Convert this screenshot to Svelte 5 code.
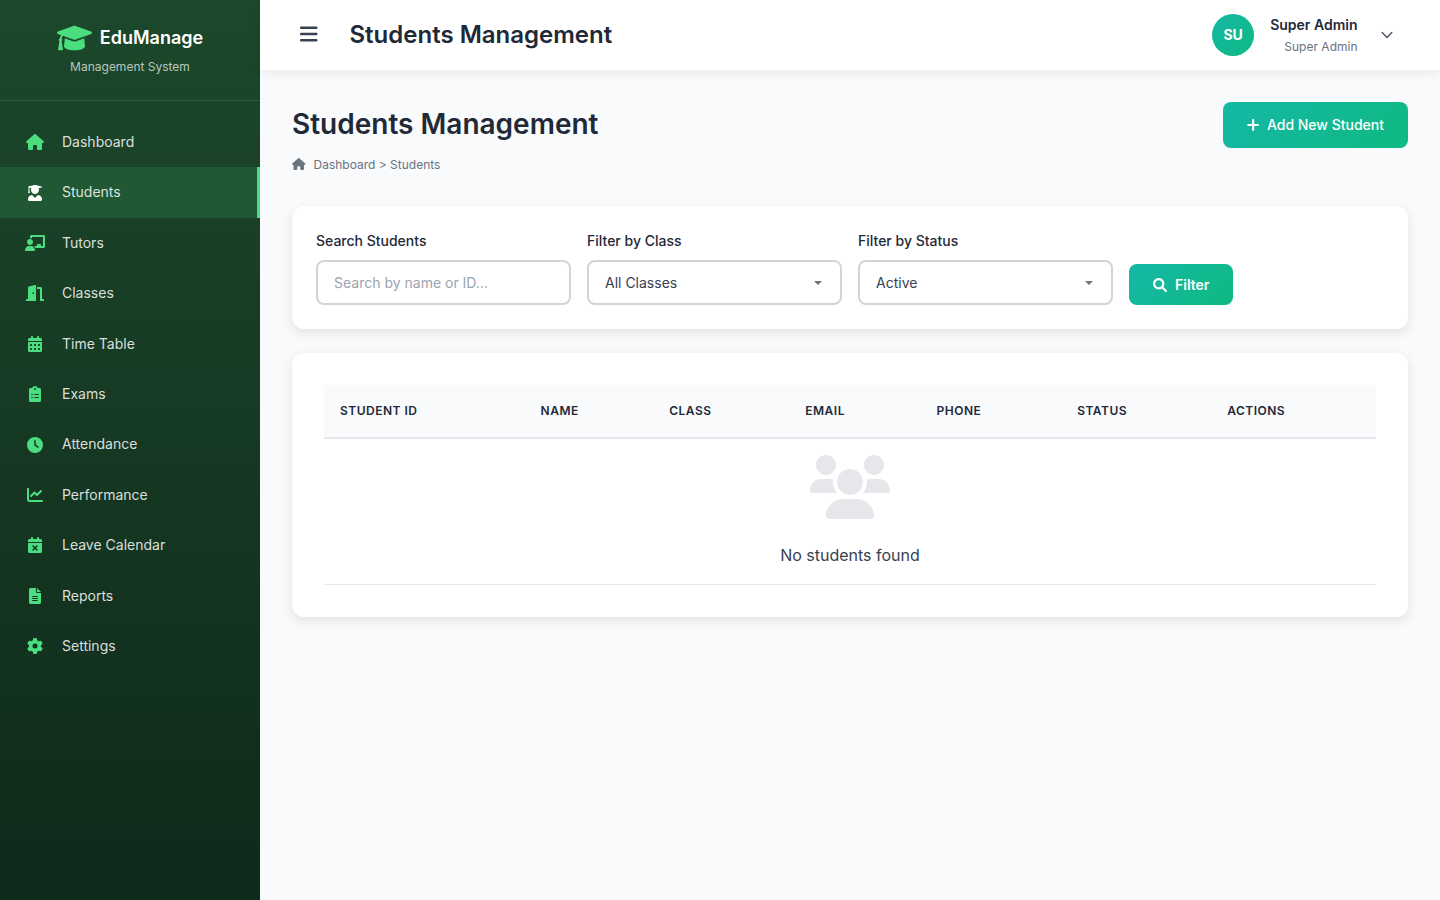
<script>
	const CALENDAR =
		'M128 0c17.7 0 32 14.3 32 32V64H288V32c0-17.7 14.3-32 32-32s32 14.3 32 32V64h48c26.5 0 48 21.5 48 48v48H0V112C0 85.5 21.5 64 48 64H96V32c0-17.7 14.3-32 32-32zM0 192H448V464c0 26.5-21.5 48-48 48H48c-26.5 0-48-21.5-48-48V192z';
	const DAY = 'v32c0 8.8 7.2 16 16 16h32c8.8 0 16-7.2 16-16v-32c0-8.8-7.2-16-16-16h-32c-8.8 0-16 7.2-16 16z';

	// each icon: viewBox width (height is always 512) and path
	const icons = {
		cap: [640, 'M623.1 136.9l-282.7-101.2c-13.73-4.91-28.7-4.91-42.43 0L16.05 136.9C6.438 140.4 0 149.6 0 160s6.438 19.65 16.05 23.09L76.07 204.6c-11.89 15.8-20.26 34.16-24.55 53.95C40.05 263.4 32 274.8 32 288c0 9.953 4.814 18.49 11.94 24.36l-24.83 149C17.48 471.1 25 480 34.89 480H93.11c9.887 0 17.41-8.879 15.78-18.63l-24.83-149C91.19 306.5 96 297.1 96 288c0-10.29-5.174-19.03-12.72-24.89c4.252-17.76 12.88-33.82 24.94-47.03l190.6 68.23c13.73 4.91 28.7 4.91 42.43 0l282.7-101.2C633.6 179.6 640 170.4 640 160S633.6 140.4 623.1 136.9zM351.1 314.4C341.7 318.1 330.9 320 320 320c-10.92 0-21.69-1.867-32-5.555L142.8 262.5L128 405.3C128 446.6 213.1 480 320 480c105.1 0 192-33.4 192-74.67l-14.78-142.9L351.1 314.4z'],
		home: [576, 'M575.8 255.5c0 18-15 32.1-32 32.1h-32l.7 160.2c0 2.7-.2 5.4-.5 8.1V472c0 22.1-17.9 40-40 40H456c-1.1 0-2.2 0-3.3-.1c-1.4 .1-2.8 .1-4.2 .1H416 392c-22.1 0-40-17.9-40-40V448 384c0-17.7-14.3-32-32-32H256c-17.7 0-32 14.3-32 32v64 24c0 22.1-17.9 40-40 40H160 128.1c-1.5 0-3-.1-4.5-.2c-1.2 .1-2.4 .2-3.6 .2H104c-22.1 0-40-17.9-40-40V360c0-.9 0-1.9 .1-2.8V287.6H32c-18 0-32-14-32-32.1c0-9 3-17 10-24L266.4 8c7-7 15-8 22-8s15 2 21 7L564.8 231.5c8 7 12 15 11 24z'],
		student: [448, 'M319.4 320.6L224 416l-95.4-95.4C57.1 323.7 0 382.2 0 454.4v9.6c0 26.5 21.5 48 48 48h352c26.5 0 48-21.5 48-48v-9.6c0-72.2-57.1-130.7-128.6-133.8zM13.6 79.8l6.4 1.5v58.4c-7 4.2-12 11.5-12 20.3 0 8.4 4.6 15.4 11.1 19.7L3.5 242c-1.7 6.9 2.1 14 7.6 14h41.8c5.5 0 9.3-7.1 7.6-14l-15.6-62.3C51.4 175.4 56 168.4 56 160c0-8.8-5-16.1-12-20.3V87.1l66 15.9c-8.6 17.2-14 36.4-14 57 0 70.7 57.3 128 128 128s128-57.3 128-128c0-20.6-5.3-39.8-14-57l96.3-23.2c18.2-4.4 18.2-27.1 0-31.5l-190.4-46c-13-3.1-26.7-3.1-39.7 0L13.6 48.2c-18.1 4.4-18.1 27.2 0 31.6z'],
		tutor: [640, 'M592 0h-384C181.5 0 160 22.25 160 49.63V96c23.42 0 45.1 6.781 63.1 17.81V64h352v288h-64V304c0-8.838-7.164-16-16-16h-96c-8.836 0-16 7.162-16 16V352H287.3c22.07 16.48 39.54 38.5 50.76 64h253.9C618.5 416 640 393.8 640 366.4V49.63C640 22.25 618.5 0 592 0zM160 320c53.02 0 96-42.98 96-96c0-53.02-42.98-96-96-96C106.1 128 64 170.1 64 224C64 277 106.1 320 160 320zM192 352H128c-70.69 0-128 57.3-128 128C0 497.7 14.33 512 32 512h256c17.67 0 32-14.33 32-32C320 409.3 262.7 352 192 352z'],
		door: [576, 'M560 448H512V113.5c0-27.25-21.5-49.5-48-49.5L352 64.01V128h96V512h112c8.875 0 16-7.125 16-15.1v-31.1C576 455.1 568.9 448 560 448zM280.3 1.007l-192 49.75C73.1 54.51 64 67.76 64 82.88V448H16c-8.875 0-16 7.125-16 15.1v31.1C0 504.9 7.125 512 16 512H320V33.13C320 11.63 300.5-4.243 280.3 1.007zM232 288c-13.25 0-24-14.37-24-31.1c0-17.62 10.75-31.1 24-31.1S256 238.4 256 256C256 273.6 245.3 288 232 288z'],
		timetable: [448, CALENDAR + [272, 400].map((y) => [64, 192, 320].map((x) => `M${x} ${y}${DAY}`).join('')).join('')],
		clipboard: [384, 'M192 0c-41.8 0-77.4 26.7-90.5 64H48C21.5 64 0 85.5 0 112V464c0 26.5 21.5 48 48 48H336c26.5 0 48-21.5 48-48V112c0-26.5-21.5-48-48-48H282.5C269.4 26.7 233.8 0 192 0zm0 64a32 32 0 1 1 0 64 32 32 0 1 1 0-64zM72 272a24 24 0 1 1 48 0 24 24 0 1 1 -48 0zm104-16H304c8.8 0 16 7.2 16 16s-7.2 16-16 16H176c-8.8 0-16-7.2-16-16s7.2-16 16-16zM72 368a24 24 0 1 1 48 0 24 24 0 1 1 -48 0zm88 0c0-8.8 7.2-16 16-16H304c8.8 0 16 7.2 16 16s-7.2 16-16 16H176c-8.8 0-16-7.2-16-16z'],
		clock: [512, 'M256 0a256 256 0 1 1 0 512A256 256 0 1 1 256 0zM232 120V256c0 8 4 15.5 10.7 20l96 64c11 7.4 25.9 4.4 33.3-6.7s4.4-25.9-6.7-33.3L280 243.2V120c0-13.3-10.7-24-24-24s-24 10.7-24 24z'],
		chart: [512, 'M64 64c0-17.7-14.3-32-32-32S0 46.3 0 64V400c0 44.2 35.8 80 80 80H480c17.7 0 32-14.3 32-32s-14.3-32-32-32H80c-8.8 0-16-7.2-16-16V64zm406.6 86.6c12.5-12.5 12.5-32.8 0-45.3s-32.8-12.5-45.3 0L320 210.7l-57.4-57.4c-12.5-12.5-32.8-12.5-45.3 0l-112 112c-12.5 12.5-12.5 32.8 0 45.3s32.8 12.5 45.3 0L240 221.3l57.4 57.4c12.5 12.5 32.8 12.5 45.3 0l128-128z'],
		leave: [448, CALENDAR + 'M305 305c9.4-9.4 9.4-24.6 0-33.9s-24.6-9.4-33.9 0l-47 47-47-47c-9.4-9.4-24.6-9.4-33.9 0s-9.4 24.6 0 33.9l47 47-47 47c-9.4 9.4-9.4 24.6 0 33.9s24.6 9.4 33.9 0l47-47 47 47c9.4 9.4 24.6 9.4 33.9 0s9.4-24.6 0-33.9l-47-47 47-47z'],
		file: [384, 'M48 0C21.5 0 0 21.5 0 48V464c0 26.5 21.5 48 48 48H336c26.5 0 48-21.5 48-48V160H256c-17.7 0-32-14.3-32-32V0H48zM256 0V128H384L256 0zM112 256H272c8.8 0 16 7.2 16 16s-7.2 16-16 16H112c-8.8 0-16-7.2-16-16s7.2-16 16-16zm0 64H272c8.8 0 16 7.2 16 16s-7.2 16-16 16H112c-8.8 0-16-7.2-16-16s7.2-16 16-16zm0 64H272c8.8 0 16 7.2 16 16s-7.2 16-16 16H112c-8.8 0-16-7.2-16-16s7.2-16 16-16z'],
		gear: [512, 'M495.9 166.6c3.2 8.7 .5 18.4-6.4 24.6l-43.3 39.4c1.1 8.3 1.7 16.8 1.7 25.4s-.6 17.1-1.7 25.4l43.3 39.4c6.9 6.2 9.6 15.9 6.4 24.6c-4.4 11.9-9.7 23.3-15.8 34.3l-4.7 8.1c-6.6 11-14 21.4-22.1 31.2c-5.9 7.2-15.7 9.6-24.5 6.8l-55.7-17.7c-13.4 10.3-28.2 18.9-44 25.4l-12.5 57.1c-2 9.1-9 16.3-18.2 17.8c-13.8 2.3-28 3.5-42.5 3.5s-28.7-1.2-42.5-3.5c-9.2-1.5-16.2-8.7-18.2-17.8l-12.5-57.1c-15.8-6.5-30.6-15.1-44-25.4L83.1 425.9c-8.8 2.8-18.6 .3-24.5-6.8c-8.1-9.8-15.5-20.2-22.1-31.2l-4.7-8.1c-6.1-11-11.4-22.4-15.8-34.3c-3.2-8.7-.5-18.4 6.4-24.6l43.3-39.4C64.6 273.1 64 264.6 64 256s.6-17.1 1.7-25.4L22.4 191.2c-6.9-6.2-9.6-15.9-6.4-24.6c4.4-11.9 9.7-23.3 15.8-34.3l4.7-8.1c6.6-11 14-21.4 22.1-31.2c5.9-7.2 15.7-9.6 24.5-6.8l55.7 17.7c13.4-10.3 28.2-18.9 44-25.4l12.5-57.1c2-9.1 9-16.3 18.2-17.8C227.3 1.2 241.5 0 256 0s28.7 1.2 42.5 3.5c9.2 1.5 16.2 8.7 18.2 17.8l12.5 57.1c15.8 6.5 30.6 15.1 44 25.4l55.7-17.7c8.8-2.8 18.6-.3 24.5 6.8c8.1 9.8 15.5 20.2 22.1 31.2l4.7 8.1c6.1 11 11.4 22.4 15.8 34.3zM256 336a80 80 0 1 0 0-160 80 80 0 1 0 0 160z'],
		bars: [448, 'M0 96C0 78.3 14.3 64 32 64H416c17.7 0 32 14.3 32 32s-14.3 32-32 32H32C14.3 128 0 113.7 0 96zM0 256c0-17.7 14.3-32 32-32H416c17.7 0 32 14.3 32 32s-14.3 32-32 32H32c-17.7 0-32-14.3-32-32zM448 416c0 17.7-14.3 32-32 32H32c-17.7 0-32-14.3-32-32s14.3-32 32-32H416c17.7 0 32 14.3 32 32z'],
		plus: [448, 'M264 80c0-22-18-40-40-40s-40 18-40 40V216H48c-22 0-40 18-40 40s18 40 40 40H184V432c0 22 18 40 40 40s40-18 40-40V296H400c22 0 40-18 40-40s-18-40-40-40H264V80z'],
		search: [512, 'M500.3 443.7l-119.7-119.7c27.22-40.41 40.65-90.9 33.46-144.7C401.8 87.79 326.8 13.32 235.2 1.723C99.01-15.51-15.51 99.01 1.724 235.2c11.6 91.64 86.08 166.7 177.6 178.9c53.8 7.189 104.3-6.236 144.7-33.46l119.7 119.7c15.62 15.62 40.95 15.62 56.57 0C515.9 484.7 515.9 459.3 500.3 443.7zM79.1 208c0-70.58 57.42-128 128-128s128 57.42 128 128c0 70.58-57.42 128-128 128S79.1 278.6 79.1 208z'],
		users: [640, 'M319.9 320c57.41 0 103.1-46.56 103.1-104c0-57.44-46.54-104-103.1-104c-57.41 0-103.1 46.56-103.1 104C215.9 273.4 262.5 320 319.9 320zM369.9 352H270.1C191.6 352 128 411.7 128 485.3C128 500.1 140.7 512 156.4 512h327.2C499.3 512 512 500.1 512 485.3C512 411.7 448.4 352 369.9 352zM512 160c44.18 0 80-35.82 80-80S556.2 0 512 0c-44.18 0-80 35.82-80 80S467.8 160 512 160zM183.9 216c0-5.449 .9824-10.63 1.609-15.91C174.6 194.1 162.6 192 149.9 192H88.08C39.44 192 0 233.8 0 285.3C0 295.6 7.887 304 17.62 304h199.5C196.7 280.2 183.9 249.7 183.9 216zM128 160c44.18 0 80-35.82 80-80S172.2 0 128 0C83.82 0 48 35.82 48 80S83.82 160 128 160zM551.9 192h-61.84c-12.8 0-24.88 3.037-35.86 8.24C454.8 205.5 455.8 210.6 455.8 216c0 33.71-12.78 64.21-33.16 88h199.7C632.1 304 640 295.6 640 285.3C640 233.8 600.6 192 551.9 192z']
	};

	const navItems = [
		{ label: 'Dashboard', icon: 'home' },
		{ label: 'Students', icon: 'student' },
		{ label: 'Tutors', icon: 'tutor' },
		{ label: 'Classes', icon: 'door' },
		{ label: 'Time Table', icon: 'timetable' },
		{ label: 'Exams', icon: 'clipboard' },
		{ label: 'Attendance', icon: 'clock' },
		{ label: 'Performance', icon: 'chart' },
		{ label: 'Leave Calendar', icon: 'leave' },
		{ label: 'Reports', icon: 'file' },
		{ label: 'Settings', icon: 'gear' }
	];

	const columns = ['Student ID', 'Name', 'Class', 'Email', 'Phone', 'Status', 'Actions'];

	let active = $state('Students');
	let search = $state('');
</script>

{#snippet icon(name)}
	<svg class="icon" viewBox="0 0 {icons[name][0]} 512" aria-hidden="true">
		<path fill="currentColor" fill-rule="evenodd" d={icons[name][1]} />
	</svg>
{/snippet}

<div class="layout">
	<aside class="sidebar">
		<div class="sidebar-header">
			<div class="logo">
				{@render icon('cap')}
				<span>EduManage</span>
			</div>
			<div class="tagline">Management System</div>
		</div>
		<nav>
			{#each navItems as item}
				<button class="nav-item" class:active={active === item.label} onclick={() => (active = item.label)}>
					<span class="nav-icon">{@render icon(item.icon)}</span>
					<span>{item.label}</span>
				</button>
			{/each}
		</nav>
	</aside>

	<div class="main">
		<header class="topbar">
			<div class="topbar-left">
				<button class="toggle" aria-label="Menu">{@render icon('bars')}</button>
				<h1>Students Management</h1>
			</div>
			<div class="user">
				<div class="avatar">SU</div>
				<div class="user-info">
					<div class="user-name">Super Admin</div>
					<div class="user-role">Super Admin</div>
				</div>
				<svg class="chevron" viewBox="0 0 12 12" aria-hidden="true">
					<path d="M1.2 3.6 6 8.4l4.8-4.8" fill="none" stroke="currentColor" stroke-width="1.4" stroke-linecap="round" stroke-linejoin="round" />
				</svg>
			</div>
		</header>

		<main>
			<div class="page-header">
				<div>
					<h2>Students Management</h2>
					<div class="breadcrumb">
						{@render icon('home')}
						<span>Dashboard &gt; Students</span>
					</div>
				</div>
				<button class="btn btn-add">{@render icon('plus')}Add New Student</button>
			</div>

			<section class="card filters">
				<div class="field">
					<label for="search">Search Students</label>
					<input id="search" type="text" placeholder="Search by name or ID..." bind:value={search} />
				</div>
				<div class="field">
					<label for="class">Filter by Class</label>
					<div class="select" id="class">All Classes<span class="caret"></span></div>
				</div>
				<div class="field">
					<label for="status">Filter by Status</label>
					<div class="select" id="status">Active<span class="caret"></span></div>
				</div>
				<button class="btn">{@render icon('search')}Filter</button>
			</section>

			<section class="card table-card">
				<table>
					<thead>
						<tr>
							{#each columns as column}
								<th>{column}</th>
							{/each}
						</tr>
					</thead>
					<tbody>
						<tr>
							<td colspan={columns.length}>
								<div class="empty-icon">{@render icon('users')}</div>
								<p>No students found</p>
							</td>
						</tr>
					</tbody>
				</table>
			</section>
		</main>
	</div>
</div>

<style>
	:global(body) {
		margin: 0;
		background: #f8fafc;
		color: #374151;
		font-family: 'Inter', sans-serif;
		font-size: 16px;
		line-height: 1.6;
	}

	* {
		box-sizing: border-box;
	}

	h1,
	h2,
	p {
		margin: 0;
	}

	button,
	input {
		font-family: inherit;
		border: none;
		margin: 0;
	}

	.icon {
		display: block;
		height: 1em;
		flex-shrink: 0;
	}

	.layout {
		display: flex;
		min-height: 100vh;
	}

	/* Sidebar */
	.sidebar {
		width: 260px;
		flex-shrink: 0;
		background: linear-gradient(180deg, #1c482b 0%, #0f291a 100%);
	}

	.sidebar-header {
		padding: 24px;
		text-align: center;
		border-bottom: 1px solid rgba(255, 255, 255, 0.1);
	}

	.logo {
		display: flex;
		align-items: center;
		justify-content: center;
		gap: 8px;
		height: 28.8px;
		margin-bottom: 4px;
		color: #fff;
		font-size: 18px;
		font-weight: 600;
	}

	.logo .icon {
		font-size: 28px;
		color: #4ade80;
	}

	.tagline {
		font-size: 12px;
		color: rgba(255, 255, 255, 0.7);
	}

	nav {
		padding: 16px 0;
	}

	.nav-item {
		display: flex;
		align-items: center;
		gap: 16px;
		width: 100%;
		padding: 14px 24px;
		background: none;
		border-right: 3px solid transparent;
		color: rgba(255, 255, 255, 0.85);
		font-size: 14px;
		line-height: 1.6;
		text-align: left;
	}

	.nav-item.active {
		background: #205834;
		border-right-color: #4ade80;
	}

	.nav-icon {
		display: flex;
		justify-content: center;
		width: 22px;
		font-size: 16px;
		color: #4ade80;
	}

	.active .nav-icon {
		color: #fff;
	}

	/* Top bar */
	.main {
		flex: 1;
	}

	.topbar {
		display: flex;
		align-items: center;
		justify-content: space-between;
		height: 70px;
		padding: 0 32px;
		background: #fff;
		box-shadow: 0 2px 12px rgba(0, 0, 0, 0.08);
	}

	.topbar-left {
		display: flex;
		align-items: center;
		gap: 24px;
	}

	.toggle {
		padding: 8px 8px 9px;
		background: none;
		color: #374151;
		font-size: 20px;
	}

	h1 {
		color: #1f2937;
		font-size: 24px;
		font-weight: 600;
	}

	.user {
		display: flex;
		align-items: center;
		gap: 16px;
		padding-right: 15.5px;
	}

	.avatar {
		display: flex;
		align-items: center;
		justify-content: center;
		width: 42px;
		height: 42px;
		border-radius: 50%;
		background: linear-gradient(135deg, #14b8a6, #10b981);
		color: #fff;
		font-size: 14px;
		font-weight: 700;
	}

	.user-info {
		text-align: right;
	}

	.user-name {
		color: #1f2937;
		font-size: 14px;
		font-weight: 600;
	}

	.user-role {
		color: #6b7280;
		font-size: 12px;
	}

	.chevron {
		width: 12px;
		height: 12px;
		margin-left: 7px;
		color: #4b5563;
	}

	/* Page content */
	main {
		padding: 32px;
	}

	.page-header {
		display: flex;
		align-items: flex-start;
		justify-content: space-between;
		margin-bottom: 32px;
	}

	h2 {
		margin-bottom: 8px;
		color: #1f2937;
		font-size: 28px;
		font-weight: 600;
	}

	.breadcrumb {
		display: flex;
		align-items: center;
		gap: 8px;
		color: #6b7280;
		font-size: 12px;
	}

	.breadcrumb .icon {
		margin-bottom: 1px;
	}

	.btn {
		display: flex;
		align-items: center;
		gap: 8px;
		padding: 12px 24px;
		border-radius: 8px;
		background: linear-gradient(135deg, #14b8a6, #10b981);
		color: #fff;
		font-size: 14px;
		font-weight: 600;
	}

	.btn-add {
		font-weight: 550;
		line-height: 1.6;
	}

	.card {
		margin-bottom: 24px;
		border-radius: 12px;
		background: #fff;
		box-shadow: 0 4px 12px rgba(0, 0, 0, 0.1);
	}

	.filters {
		display: flex;
		align-items: flex-end;
		gap: 16px;
		padding: 24px;
	}

	.field {
		width: 255px;
	}

	.field label {
		display: block;
		margin-bottom: 8px;
		color: #1f2937;
		font-size: 14px;
		font-weight: 500;
	}

	.field input,
	.select {
		display: block;
		width: 100%;
		height: 45px;
		padding: 12px 16px;
		border: 2px solid #d1d5db;
		border-radius: 8px;
		background: #fff;
		color: #374151;
		font-size: 14px;
		line-height: 17px;
	}

	.field input::placeholder {
		color: #9ca3af;
	}

	.select {
		display: flex;
		align-items: center;
		justify-content: space-between;
	}

	.caret {
		margin-right: 2px;
		border: 4px solid transparent;
		border-top-color: #6b7280;
		border-bottom: none;
	}

	/* Table */
	.table-card {
		padding: 32px;
	}

	table {
		width: 100%;
		border-collapse: collapse;
	}

	th {
		padding: 16px;
		background: #f8fafc;
		border-bottom: 2px solid #e5e7eb;
		color: #1f2937;
		font-size: 12px;
		font-weight: 600;
		letter-spacing: 0.5px;
		text-align: left;
		text-transform: uppercase;
	}

	td {
		padding: 16px;
		border-bottom: 1px solid #e5e7eb;
		text-align: center;
	}

	.empty-icon {
		display: flex;
		justify-content: center;
		margin-bottom: 24px;
		color: #e5e7eb;
		font-size: 64px;
	}
</style>
